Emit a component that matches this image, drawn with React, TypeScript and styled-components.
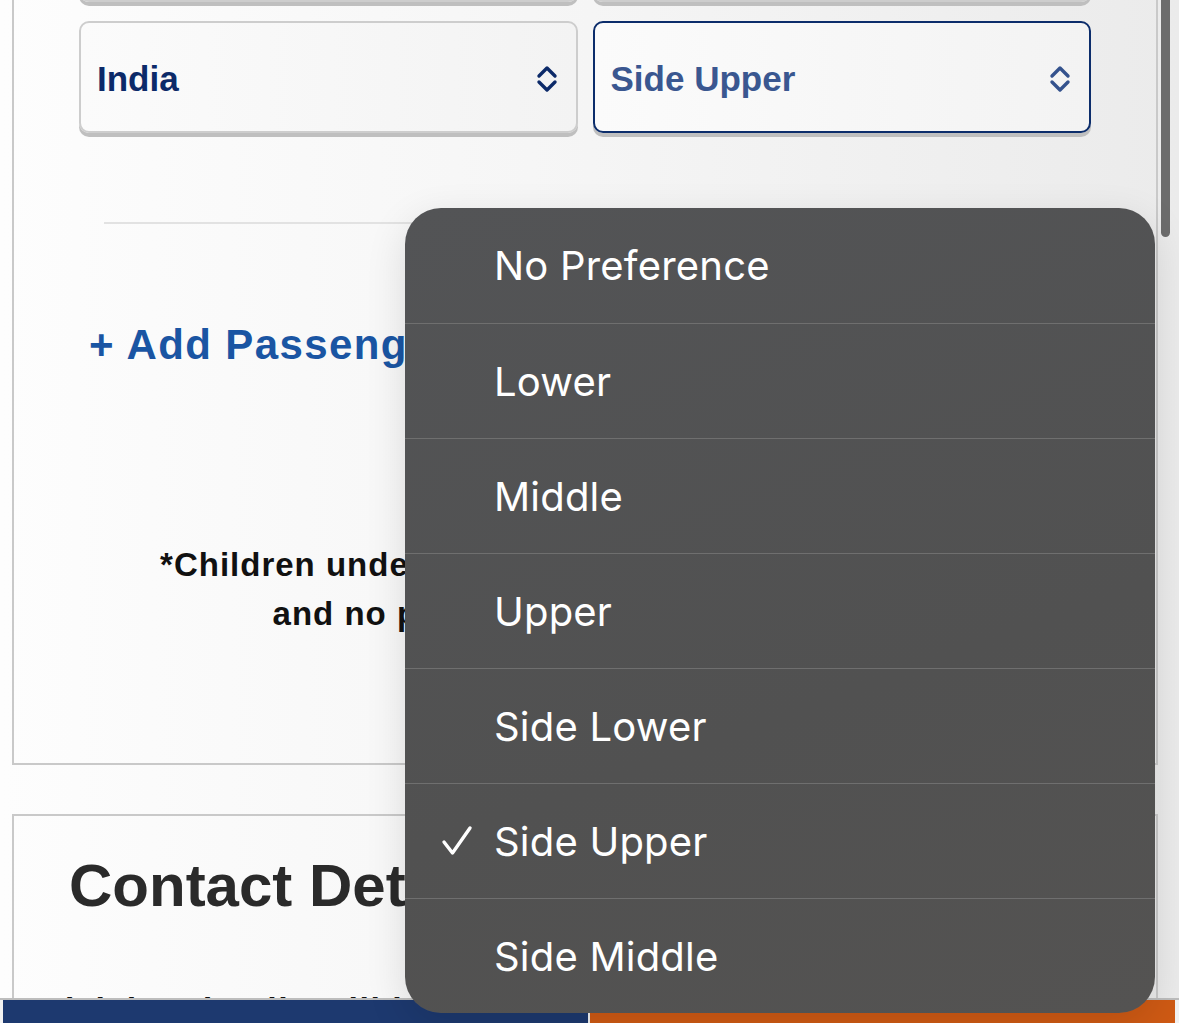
import styled, { createGlobalStyle } from "styled-components";

const GlobalStyle = createGlobalStyle`
    html, body {
        margin: 0;
        padding: 0;
        overflow: hidden;
    }
    body {
        background: linear-gradient(90deg, #fdfdfd 0%, #f6f6f6 45%, #ebebeb 100%);
        font-family: "Liberation Sans", Arial, sans-serif;
    }
`;

const berths = [
    "No Preference",
    "Lower",
    "Middle",
    "Upper",
    "Side Lower",
    "Side Upper",
    "Side Middle",
];

const Chevrons = ({ color }: { color: string }) => (
    <svg width="24" height="30" viewBox="0 0 24 30" fill="none">
        <path
            d="M4 12 L12 4 L20 12 M4 18 L12 26 L20 18"
            stroke={color}
            strokeWidth="3.4"
            strokeLinecap="round"
            strokeLinejoin="round"
        />
    </svg>
);

const Check = () => (
    <svg width="32" height="32" viewBox="0 0 32 32" fill="none">
        <path
            d="M3 17 L11.5 28 L29 3"
            stroke="#ffffff"
            strokeWidth="3.4"
            strokeLinecap="round"
            strokeLinejoin="round"
        />
    </svg>
);

export default function App() {
    return (
        <>
            <GlobalStyle />
            <Page>
                <PassengerCard>
                    <SelectRow>
                        <SelectBox />
                        <SelectBox />
                    </SelectRow>
                    <SelectRow $gap>
                        <SelectBox>
                            <SelectValue>India</SelectValue>
                            <Chevrons color="#0c2a69" />
                        </SelectBox>
                        <SelectBox $focused>
                            <SelectValue $muted>Side Upper</SelectValue>
                            <Chevrons color="#34528d" />
                        </SelectBox>
                    </SelectRow>
                    <Divider />
                    <AddPassenger>+ Add Passenger</AddPassenger>
                    <Note>
                        *Children under 5 years of age shall be carried free
                        <br />
                        and no purchase of ticket is required.
                    </Note>
                </PassengerCard>

                <ContactCard>
                    <ContactTitle>Contact Details</ContactTitle>
                    <ContactHint>(Ticket details will be sent to email and mobile)</ContactHint>
                </ContactCard>

                <ScrollThumb />

                <BottomBar>
                    <BarButton $color="#1d396f" />
                    <BarButton $color="#cf5a14" />
                </BottomBar>

                <BerthMenu>
                    {berths.map(berth => (
                        <MenuItem key={berth}>
                            <CheckSlot>{berth === "Side Upper" && <Check />}</CheckSlot>
                            <MenuLabel>{berth}</MenuLabel>
                        </MenuItem>
                    ))}
                </BerthMenu>
            </Page>
        </>
    );
}

const Page = styled.div`
    position: relative;
    width: 1179px;
    height: 1023px;
    overflow: hidden;
    padding: 0 21px 0 12px;
    box-sizing: border-box;
`;

const PassengerCard = styled.section`
    margin-top: -132px;
    border: 2px solid #c9c9c9;
    padding: 20px 65px 125px;
    display: flex;
    flex-direction: column;
`;

const SelectRow = styled.div<{ $gap?: boolean }>`
    display: grid;
    grid-template-columns: 1fr 1fr;
    gap: 15px;
    margin-top: ${p => (p.$gap ? "19px" : "0")};
`;

const SelectBox = styled.div<{ $focused?: boolean }>`
    height: 112px;
    box-sizing: border-box;
    border: 2px solid ${p => (p.$focused ? "#0c2d6b" : "#cdcdcd")};
    border-radius: 10px;
    box-shadow: 0 4px 0 #bfbfbf;
    background: linear-gradient(90deg, #fbfbfb, #f3f3f3);
    display: flex;
    align-items: center;
    justify-content: space-between;
    padding: 4px 17px 0 16px;
`;

const SelectValue = styled.span<{ $muted?: boolean }>`
    font-size: 35px;
    font-weight: 700;
    color: ${p => (p.$muted ? "#3a5790" : "#0c2a69")};
`;

const Divider = styled.hr`
    margin: 89px 25px 0;
    border: none;
    height: 2px;
    background: #e2e2e2;
`;

const AddPassenger = styled.div`
    margin: 96px 0 0 10px;
    font-size: 42px;
    line-height: 50px;
    font-weight: 700;
    letter-spacing: 1.4px;
    color: #1a55a3;
`;

const Note = styled.p`
    margin: 170px 0 0;
    text-align: center;
    font-size: 33px;
    line-height: 49px;
    font-weight: 700;
    letter-spacing: 1px;
    color: #111111;
`;

const ContactCard = styled.section`
    margin-top: 49px;
    border: 2px solid #c9c9c9;
    padding: 35px 53px 40px 55px;
`;

const ContactTitle = styled.h2`
    margin: 0;
    font-size: 60px;
    line-height: 70px;
    font-weight: 700;
    color: #2a2a2a;
`;

const ContactHint = styled.p`
    margin: 66px 0 0 -8px;
    font-size: 34px;
    line-height: 44px;
    font-weight: 700;
    letter-spacing: 1.5px;
    color: #111111;
`;

const ScrollThumb = styled.div`
    position: absolute;
    left: 1161px;
    top: -20px;
    width: 9px;
    height: 257px;
    border-radius: 5px;
    background: #6c6c6c;
`;

const BerthMenu = styled.ul`
    position: absolute;
    left: 405px;
    top: 208px;
    width: 750px;
    margin: 0;
    padding: 0;
    list-style: none;
    border-radius: 36px;
    overflow: hidden;
    background: linear-gradient(160deg, #535456 0%, #515151 60%, #545352 100%);
    box-shadow: 0 12px 40px rgba(0, 0, 0, 0.12);
`;

const MenuItem = styled.li`
    height: 115px;
    box-sizing: border-box;
    display: grid;
    grid-template-columns: 90px 1fr;
    align-items: center;

    & + & {
        border-top: 1px solid #6f6f6f;
    }
`;

const CheckSlot = styled.span`
    display: flex;
    justify-content: flex-end;
    padding-right: 22px;
`;

const MenuLabel = styled.span`
    font-family: Inter, "Noto Sans", sans-serif;
    font-size: 40px;
    font-weight: 400;
    color: #ffffff;
    letter-spacing: 0.2px;
    margin-left: -1px;
`;

const BottomBar = styled.div`
    position: absolute;
    left: 0;
    right: 0;
    top: 998px;
    height: 40px;
    display: flex;
    gap: 2px;
    padding: 0 4px 0 3px;
    border-top: 2px solid #bdbdbd;
    background: #f2f2f2;
`;

const BarButton = styled.div<{ $color: string }>`
    flex: 1;
    background: ${p => p.$color};
`;
